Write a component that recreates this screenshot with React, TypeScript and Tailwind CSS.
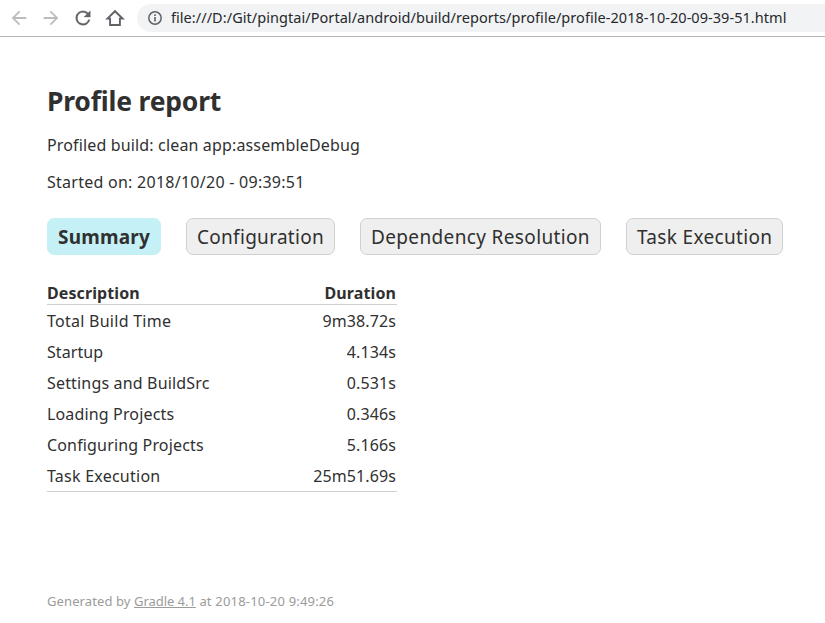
const tabs = [
  { label: "Summary", style: "w-[114px] border-[#c5f0f5] bg-[#c5f0f5] font-bold tracking-[0.2px]" },
  { label: "Configuration", style: "w-[149px] border-[#d0d0d0] bg-[#efefef] tracking-[0.29px]" },
  { label: "Dependency Resolution", style: "w-[241px] border-[#d0d0d0] bg-[#efefef] tracking-[0.36px]" },
  { label: "Task Execution", style: "w-[157px] border-[#d0d0d0] bg-[#efefef] tracking-[0.33px]" },
];

const rows = [
  { label: "Total Build Time", value: "9m38.72s", spacing: "tracking-[0.26px]" },
  { label: "Startup", value: "4.134s", spacing: "tracking-[0.08px]" },
  { label: "Settings and BuildSrc", value: "0.531s", spacing: "tracking-[0.17px]" },
  { label: "Loading Projects", value: "0.346s", spacing: "tracking-[0.15px]" },
  { label: "Configuring Projects", value: "5.166s", spacing: "tracking-[0.16px]" },
  { label: "Task Execution", value: "25m51.69s", spacing: "tracking-[0.24px]" },
];

function BrowserBar() {
  return (
    <header className="flex h-[37px] items-start border-b border-[#b6b6b6] bg-white pt-1 text-[#5f6368]">
      <div className="flex h-7 w-[137px] shrink-0 items-center gap-[10px] pl-2">
        <svg className="size-[22px] shrink-0 text-[#babcbe]" viewBox="0 0 24 24" fill="currentColor">
          <path d="M20 10.9H7.83l5.59-5.49L12 4l-8 8 8 8 1.41-1.41L7.83 13.1H20z" />
        </svg>
        <svg className="size-[22px] shrink-0 text-[#babcbe]" viewBox="0 0 24 24" fill="currentColor">
          <path d="M12 4l-1.41 1.41 5.58 5.49H4v2.2h12.17l-5.58 5.49L12 20l8-8z" />
        </svg>
        <svg className="size-[22px] shrink-0" viewBox="0 0 24 24" fill="currentColor" stroke="currentColor" strokeWidth="0.25">
          <path d="M17.65 6.35A7.95 7.95 0 0 0 12 4a8 8 0 1 0 7.73 10h-2.08A6 6 0 1 1 12 6c1.66 0 3.14.69 4.22 1.78L13 11h7V4l-2.35 2.35z" />
        </svg>
        <svg className="size-[22px] shrink-0" viewBox="-1 -1 22 22" fill="none" stroke="currentColor" strokeWidth="1.9">
          <path d="M2.4 10.6 10 3.2l7.6 7.4h-2.7v6.4H5.1v-6.4z" />
        </svg>
      </div>
      <div className="flex h-7 flex-1 items-start overflow-hidden rounded-l-full bg-[#f1f3f4] pl-[11px]">
        <svg className="mt-[7px] size-[14px] shrink-0" viewBox="0 0 14 14" fill="none" stroke="currentColor" strokeWidth="1.5">
          <circle cx="7" cy="7" r="6.2" />
          <path d="M7 6v4.5M7 3.3v1.6" strokeWidth="1.6" />
        </svg>
        <span className="ml-[9px] whitespace-nowrap text-[14.5px] leading-[26px] tracking-[0.05px] text-[#27292c]">
          file:///D:/Git/pingtai/Portal/android/build/reports/profile/profile-2018-10-20-09-39-51.html
        </span>
      </div>
    </header>
  );
}

export default function App() {
  return (
    <div className="h-[623px] w-[825px] overflow-hidden bg-white font-['Noto_Sans','Open_Sans',sans-serif] text-base text-[#303030]">
      <BrowserBar />
      <main className="pl-[47px] pt-[47px]">
        <h1 className="text-[26.5px] font-bold leading-[34px] tracking-[-0.2px]">Profile report</h1>
        <p className="mt-[15px] leading-6 tracking-[0.15px]">Profiled build: clean app:assembleDebug</p>
        <p className="mt-[13px] leading-6 tracking-[0.26px]">Started on: 2018/10/20 - 09:39:51</p>
        <nav className="mt-6 flex gap-[25px]">
          {tabs.map((tab) => (
            <a key={tab.label} className={`h-[37px] shrink-0 whitespace-nowrap rounded-[7px] border pl-[10px] text-[19px] leading-[37px] ${tab.style}`}>
              {tab.label}
            </a>
          ))}
        </nav>
        <table className="mt-[27px] w-[350px] border-separate border-spacing-0">
          <thead>
            <tr className="h-[23px] leading-[22px] tracking-[0.1px]">
              <th className="border-b border-[#d0d0d0] p-0 text-left font-bold">Description</th>
              <th className="border-b border-[#d0d0d0] p-0 pr-px text-right font-bold">Duration</th>
            </tr>
          </thead>
          <tbody>
            {rows.map((row) => (
              <tr key={row.label} className="leading-[30px]">
                <td className={`p-0 pt-px ${row.spacing}`}>{row.label}</td>
                <td className="p-0 pr-px pt-px text-right tracking-[0.1px]">{row.value}</td>
              </tr>
            ))}
          </tbody>
        </table>
        <div className="w-[350px] border-t border-[#d0d0d0]" />
        <footer className="mt-[99px] whitespace-pre text-[13px] leading-5 text-[#9b9b9b]">
          <span className="tracking-[0.1px]">Generated by </span>
          <a className="tracking-[-0.05px] underline">Gradle 4.1</a>
          <span className="tracking-[0.19px]"> at 2018-10-20 9:49:26</span>
        </footer>
      </main>
    </div>
  );
}
